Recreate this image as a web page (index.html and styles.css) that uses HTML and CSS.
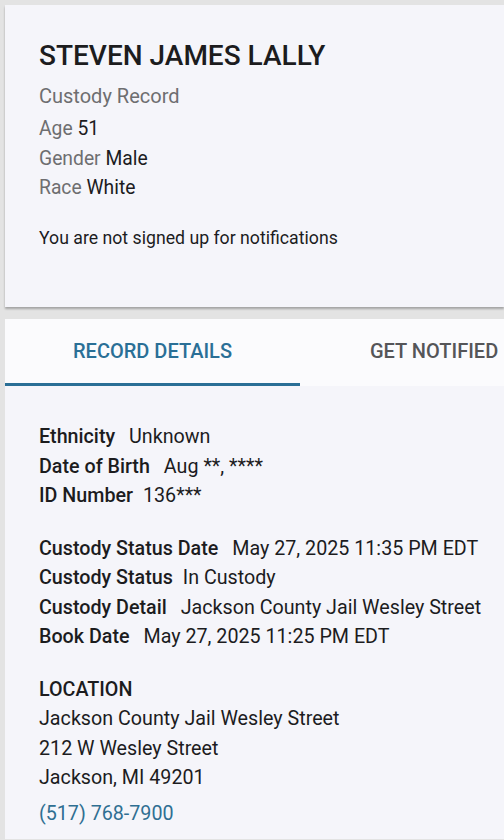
FILE: index.html
```html
<!DOCTYPE html>
<html>
<head>
<meta charset="utf-8">
<link rel="stylesheet" href="styles.css">
</head>
<body>
<section class="card summary">
  <h1 class="name">STEVEN JAMES LALLY</h1>
  <div class="subtitle">Custody Record</div>
  <div class="facts">
    <div class="fact"><span class="fact-label">Age</span> <span class="fact-value">51</span></div>
    <div class="fact"><span class="fact-label">Gender</span> <span class="fact-value">Male</span></div>
    <div class="fact"><span class="fact-label">Race</span> <span class="fact-value">White</span></div>
  </div>
  <p class="notice">You are not signed up for notifications</p>
</section>

<section class="card details">
  <nav class="tabs">
    <div class="tab active">RECORD DETAILS</div>
    <div class="tab">GET NOTIFIED</div>
  </nav>
  <div class="panel">
    <div class="group">
      <div class="row"><span class="label wide">Ethnicity</span><span class="value">Unknown</span></div>
      <div class="row"><span class="label wide">Date of Birth</span><span class="value">Aug **, ****</span></div>
      <div class="row"><span class="label">ID Number</span><span class="value">136***</span></div>
    </div>
    <div class="group">
      <div class="row"><span class="label wide">Custody Status Date</span><span class="value">May 27, 2025 11:35 PM EDT</span></div>
      <div class="row"><span class="label">Custody Status</span><span class="value">In Custody</span></div>
      <div class="row"><span class="label wide">Custody Detail</span><span class="value">Jackson County Jail Wesley Street</span></div>
      <div class="row"><span class="label wide">Book Date</span><span class="value">May 27, 2025 11:25 PM EDT</span></div>
    </div>
    <div class="group location">
      <div class="row"><span class="label">LOCATION</span></div>
      <div class="row">Jackson County Jail Wesley Street</div>
      <div class="row">212 W Wesley Street</div>
      <div class="row">Jackson, MI 49201</div>
      <a class="phone" href="#">(517) 768-7900</a>
    </div>
  </div>
</section>
</body>
</html>
```

FILE: styles.css
```css
html, body {
  margin: 0;
  padding: 0;
  overflow: hidden;
}
body {
  background: #e3e3e3;
  font-family: Roboto, "Noto Sans", "Liberation Sans", sans-serif;
  color: #1f1f1f;
  height: 840px;
}
.card {
  background: #f5f5fa;
  margin-left: 5px;
}
.summary {
  margin-top: 5px;
  height: 302px;
  box-sizing: border-box;
  padding: 36px 0 0 34px;
  box-shadow: 0 2px 2px rgba(0,0,0,0.28);
}
.name {
  margin: 0;
  font-size: 28px;
  font-weight: 500;
  line-height: 30px;
  color: #1c1c1e;
  letter-spacing: 0;
}
.subtitle {
  margin-top: 10px;
  font-size: 20px;
  line-height: 30px;
  color: #6e6e70;
}
.facts {
  margin-top: 3px;
}
.fact {
  font-size: 19.3px;
  line-height: 29.5px;
}
.fact-label {
  color: #6e6e70;
}
.fact-value {
  color: #1c1c1e;
}
.notice {
  margin: 23px 0 0;
  font-size: 17.7px;
  line-height: 24px;
  color: #1c1c1e;
}
.details {
  margin-top: 12px;
  min-height: 520px;
}
.tabs {
  display: flex;
  background: #fbfbfd;
  height: 67px;
}
.tab {
  font-size: 20px;
  font-weight: 500;
  line-height: 65px;
  color: #555558;
  white-space: nowrap;
}
.tab.active {
  width: 295px;
  text-align: center;
  color: #2a6f96;
  border-bottom: 3px solid #2a6f96;
}
.tab + .tab {
  padding-left: 70px;
}
.panel {
  padding: 36px 0 0 34px;
}
.group + .group {
  margin-top: 23px;
}
.row {
  font-size: 19.7px;
  line-height: 29.5px;
  color: #1c1c1e;
  white-space: nowrap;
}
.label {
  font-weight: 500;
  margin-right: 10px;
}
.label.wide {
  margin-right: 14px;
}
.phone {
  display: block;
  margin-top: 6px;
  font-size: 19.7px;
  line-height: 29.5px;
  color: #2f6f92;
  text-decoration: none;
}
```
